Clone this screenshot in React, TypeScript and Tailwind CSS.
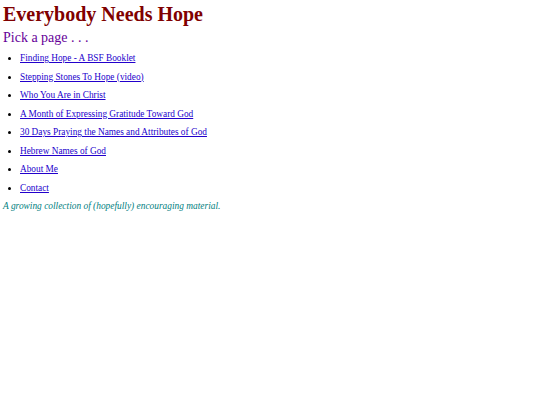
export default function App() {
  const links = [
    'Finding Hope - A BSF Booklet',
    'Stepping Stones To Hope (video)',
    'Who You Are in Christ',
    'A Month of Expressing Gratitude Toward God',
    '30 Days Praying the Names and Attributes of God',
    'Hebrew Names of God',
    'About Me',
    'Contact',
  ];

  return (
    <div className="min-h-[405px] bg-white px-[3px] font-['Liberation_Serif',serif]">
      <h1 className="mt-[2px] text-[20px] font-bold leading-[24px] text-[#800000]">Everybody Needs Hope</h1>
      <h2 className="mt-[2px] text-[14px] leading-[20px] text-[#660099]">Pick a page . . .</h2>
      <ul className="mt-[1px] list-disc pl-[17px] text-[9.3px]">
        {links.map((label) => (
          <li key={label} className="leading-[18.5px]">
            <a href="#" className="text-[#2200cc] underline">
              {label}
            </a>
          </li>
        ))}
      </ul>
      <p className="text-[9.4px] italic leading-[18px] text-[#008080]">
        A growing collection of (hopefully) encouraging material.
      </p>
    </div>
  );
}
